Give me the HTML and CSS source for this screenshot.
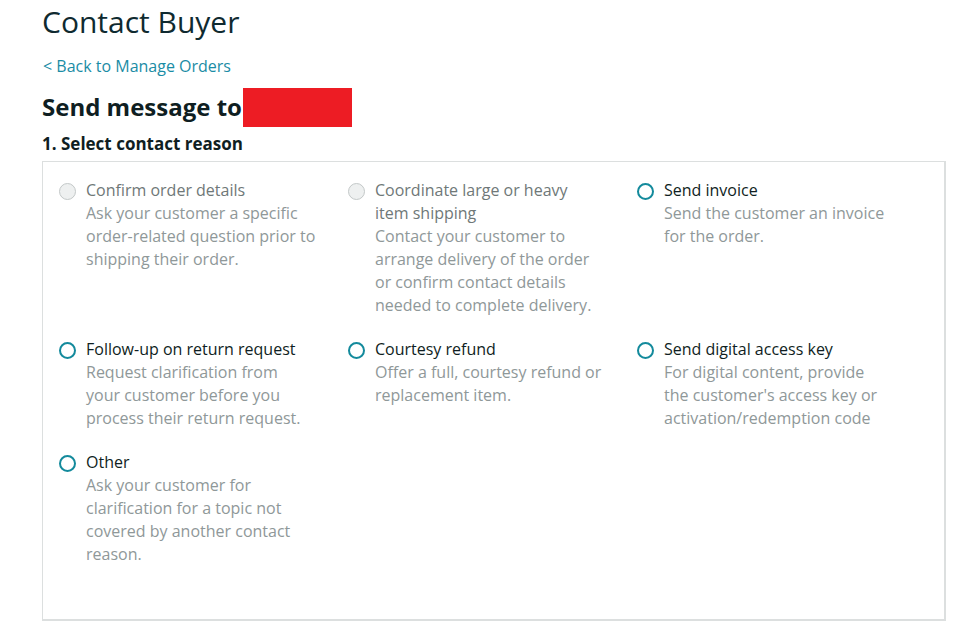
FILE: index.html
```html
<!DOCTYPE html>
<html lang="en">
<head>
<meta charset="utf-8">
<title>Contact Buyer</title>
<link rel="stylesheet" href="styles.css">
</head>
<body>
<main class="page">
  <h1 class="title">Contact Buyer</h1>
  <a class="back" href="#">&lt; Back to Manage Orders</a>
  <h2 class="send">Send message to<span class="redact"></span></h2>
  <h3 class="step">1. Select contact reason</h3>
  <section class="box">
    <div class="grid">
      <label class="opt disabled">
        <span class="radio"></span>
        <span class="text">
          <span class="name">Confirm order details</span>
          <span class="desc">Ask your customer a specific<br>order-related question prior to<br>shipping their order.</span>
        </span>
      </label>
      <label class="opt disabled">
        <span class="radio"></span>
        <span class="text">
          <span class="name">Coordinate large or heavy<br>item shipping</span>
          <span class="desc">Contact your customer to<br>arrange delivery of the order<br>or confirm contact details<br>needed to complete delivery.</span>
        </span>
      </label>
      <label class="opt">
        <span class="radio"></span>
        <span class="text">
          <span class="name">Send invoice</span>
          <span class="desc">Send the customer an invoice<br>for the order.</span>
        </span>
      </label>
      <label class="opt">
        <span class="radio"></span>
        <span class="text">
          <span class="name">Follow-up on return request</span>
          <span class="desc">Request clarification from<br>your customer before you<br>process their return request.</span>
        </span>
      </label>
      <label class="opt">
        <span class="radio"></span>
        <span class="text">
          <span class="name">Courtesy refund</span>
          <span class="desc">Offer a full, courtesy refund or<br>replacement item.</span>
        </span>
      </label>
      <label class="opt">
        <span class="radio"></span>
        <span class="text">
          <span class="name">Send digital access key</span>
          <span class="desc">For digital content, provide<br>the customer's access key or<br>activation/redemption code</span>
        </span>
      </label>
      <label class="opt">
        <span class="radio"></span>
        <span class="text">
          <span class="name">Other</span>
          <span class="desc">Ask your customer for<br>clarification for a topic not<br>covered by another contact<br>reason.</span>
        </span>
      </label>
    </div>
  </section>
</main>
</body>
</html>
```

FILE: styles.css
```css
* { box-sizing: border-box; }
html, body { margin: 0; padding: 0; background: #fff; }
body {
  font-family: "Open Sans", "Liberation Sans", Arial, sans-serif;
  color: #0f1111;
}
.page {
  padding: 2px 29px 0 42px;
  display: flex;
  flex-direction: column;
  align-items: flex-start;
}
.title {
  margin: 0;
  font-size: 30px;
  font-weight: 400;
  line-height: 40px;
  color: #0f2a30;
}
.back {
  margin-top: 14px;
  font-size: 16px;
  line-height: 20px;
  color: #1a8ca5;
  text-decoration: none;
  padding-left: 1px;
}
.send {
  margin: 11px 0 0;
  font-size: 24px;
  font-weight: 700;
  line-height: 40px;
  display: flex;
  align-items: center;
  color: #0f1e22;
}
.redact {
  display: inline-block;
  width: 109px;
  height: 39px;
  background: #ed1c24;
  margin-left: 1px;
}
.step {
  margin: 6px 0 0;
  font-size: 17px;
  font-weight: 700;
  line-height: 22px;
  color: #0f1e22;
}
.box {
  margin-top: 6px;
  width: 904px;
  height: 460px;
  border: 2px solid #dcdfdf;
  border-top-width: 1px;
  border-left-width: 1px;
  padding: 17px 16px 0 16px;
}
.grid {
  display: grid;
  grid-template-columns: repeat(3, 289px);
  row-gap: 21px;
}
.opt {
  display: flex;
  gap: 10px;
  align-items: flex-start;
  font-size: 16px;
  line-height: 23px;
}
.radio {
  flex: none;
  width: 17px;
  height: 17px;
  margin-top: 4px;
  border-radius: 50%;
  border: 2px solid #138a9c;
  background: #fff;
}
.disabled .radio {
  border: 1px solid #c3c8c8;
  background: #eef0f0;
}
.text {
  display: flex;
  flex-direction: column;
  white-space: nowrap;
}
.name { color: #0f1e22; }
.disabled .name { color: #6f7878; }
.desc { color: #8f9899; }
```
